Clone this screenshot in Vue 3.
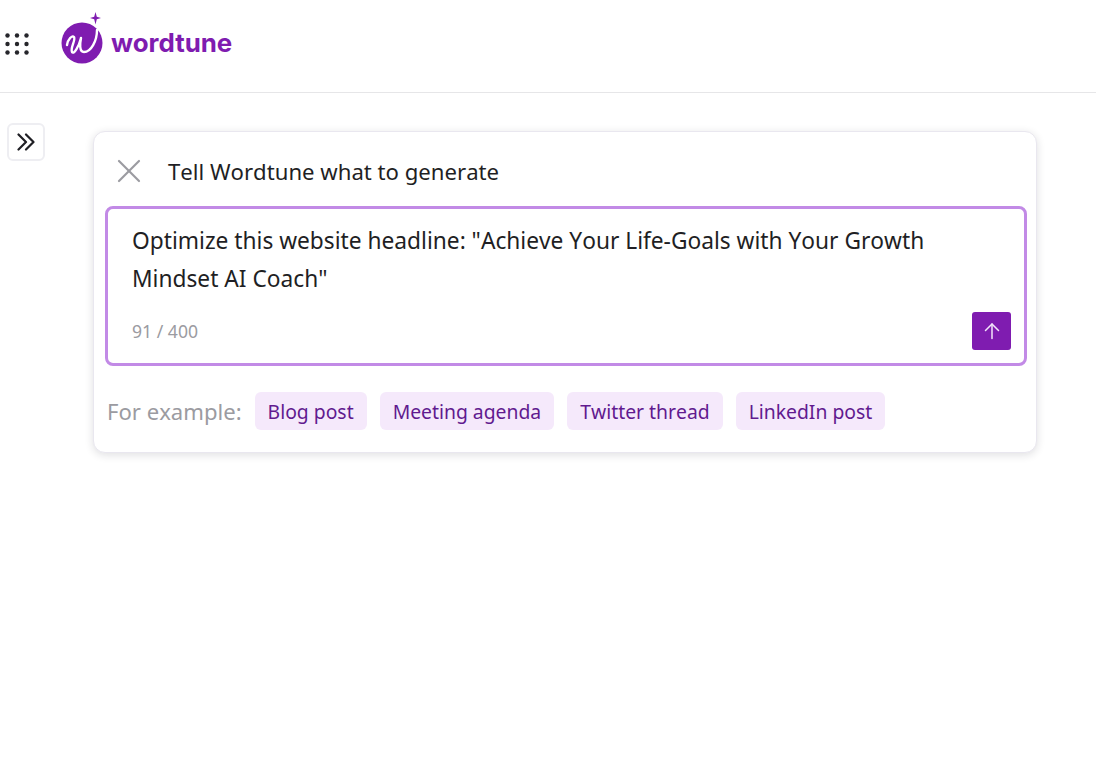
<template>
  <div class="app">
    <header class="topbar">
      <svg class="grid-icon" width="24" height="22" viewBox="0 0 24 22">
        <g fill="#26262b">
          <template v-for="y in [2.5, 11, 19.5]" :key="y">
            <circle v-for="x in [2.5, 12, 21.5]" :key="x" :cx="x" :cy="y" r="2.2" />
          </template>
        </g>
      </svg>
      <div class="logo">
        <svg width="44" height="54" viewBox="0 0 44 54">
          <circle cx="21" cy="33" r="20.5" fill="#7f1cb0" />
          <path d="M34.5 2 L35.8 6.7 L40 8 L35.8 9.3 L34.5 14.5 L33.2 9.3 L29 8 L33.2 6.7 Z" fill="#7f1cb0" />
          <path d="M6 35 C7 29 11 25 13 27 C15 30 9 38 11 42 C13 45 18 36 20 28 C19 33 18 42 23 42 C30 42 36 31 36 20" fill="none" stroke="#fff" stroke-width="2.4" stroke-linecap="round" stroke-linejoin="round" />
        </svg>
        <span class="logo-text">wordtune</span>
      </div>
    </header>

    <main class="content">
      <button class="toggle">
        <svg width="20" height="18" viewBox="0 0 20 18" fill="none" stroke="#1f1f24" stroke-width="2.2" stroke-linecap="round" stroke-linejoin="round">
          <path d="M2.5 1.5 L10 9 L2.5 16.5" />
          <path d="M10 1.5 L17.5 9 L10 16.5" />
        </svg>
      </button>

      <section class="card">
        <div class="card-head">
          <svg width="24" height="24" viewBox="0 0 24 24" fill="none" stroke="#9b9ba1" stroke-width="2.2" stroke-linecap="round">
            <path d="M2 2 L22 22" />
            <path d="M22 2 L2 22" />
          </svg>
          <h2>Tell Wordtune what to generate</h2>
        </div>

        <div class="prompt-box">
          <p class="prompt-text">{{ prompt }}</p>
          <div class="prompt-foot">
            <span class="count">{{ prompt.length }} / 400</span>
            <button class="send">
              <svg width="18" height="18" viewBox="0 0 18 18" fill="none" stroke="#f3e6fa" stroke-width="1.5" stroke-linecap="round" stroke-linejoin="round">
                <path d="M9 16.5 V2" />
                <path d="M2.5 8.5 L9 2 L15.5 8.5" />
              </svg>
            </button>
          </div>
        </div>

        <div class="examples">
          <span class="examples-label">For example:</span>
          <span v-for="chip in chips" :key="chip" class="chip">{{ chip }}</span>
        </div>
      </section>
    </main>
  </div>
</template>

<script setup>
const prompt = 'Optimize this website headline: "Achieve Your Life-Goals with Your Growth Mindset AI Coach"'
const chips = ['Blog post', 'Meeting agenda', 'Twitter thread', 'LinkedIn post']
</script>

<style>
html, body { background: #fff; }
</style>

<style scoped>
* { box-sizing: border-box; margin: 0; padding: 0; }

.app {
  font-family: "Noto Sans", "Open Sans", sans-serif;
  font-kerning: none;
  min-height: 766px;
  background: #fff;
  color: #1f1f24;
}

.topbar {
  display: flex;
  align-items: flex-start;
  height: 93px;
  padding: 33px 0 0 5px;
  border-bottom: 1px solid #e6e6e8;
}

.grid-icon { flex-shrink: 0; }

.logo {
  display: flex;
  align-items: flex-start;
  margin: -23px 0 0 32px;
}

.logo-text {
  font-family: Inter, sans-serif;
  font-kerning: normal;
  font-weight: 700;
  font-size: 25.9px;
  line-height: 32px;
  color: #7f1cb0;
  margin: 17px 0 0 6px;
}

.content {
  display: flex;
  align-items: flex-start;
  padding: 30px 0 0 7px;
}

.toggle {
  display: flex;
  align-items: center;
  justify-content: center;
  width: 38px;
  height: 38px;
  background: #fff;
  border: 2px solid #eeeef2;
  border-radius: 6px;
}

.card {
  width: 944px;
  height: 322px;
  margin: 8px 0 0 48px;
  padding: 0 9px 0 11px;
  background: #fff;
  border: 1px solid #e9e7ef;
  border-radius: 12px;
  box-shadow: 0 2px 8px rgba(30, 30, 40, 0.14);
}

.card-head {
  display: flex;
  align-items: center;
  gap: 27px;
  height: 74px;
  padding: 3px 0 0 12px;
}

.card-head h2 {
  font-size: 22.15px;
  font-weight: 400;
  line-height: 30px;
}

.prompt-box {
  height: 160px;
  padding: 13px 13px 0 24px;
  border: 3px solid #c28ae6;
  border-radius: 8px;
}

.prompt-text {
  font-size: 22.72px;
  line-height: 38px;
  height: 76px;
}

.prompt-foot {
  display: flex;
  align-items: center;
  justify-content: space-between;
  margin-top: 14px;
}

.count {
  font-size: 17.6px;
  color: #9b9ba1;
}

.send {
  display: flex;
  align-items: center;
  justify-content: center;
  width: 39px;
  height: 38px;
  background: #7f1cb0;
  border: none;
  border-radius: 3px;
}

.examples {
  display: flex;
  align-items: center;
  gap: 13px;
  margin-top: 26px;
  padding-left: 2px;
}

.examples-label {
  font-size: 22.1px;
  color: #9b9ba1;
}

.chip {
  display: flex;
  align-items: center;
  height: 38px;
  padding: 0 13px;
  font-size: 19.35px;
  color: #611a8f;
  background: #f5e9fb;
  border-radius: 6px;
}
</style>
